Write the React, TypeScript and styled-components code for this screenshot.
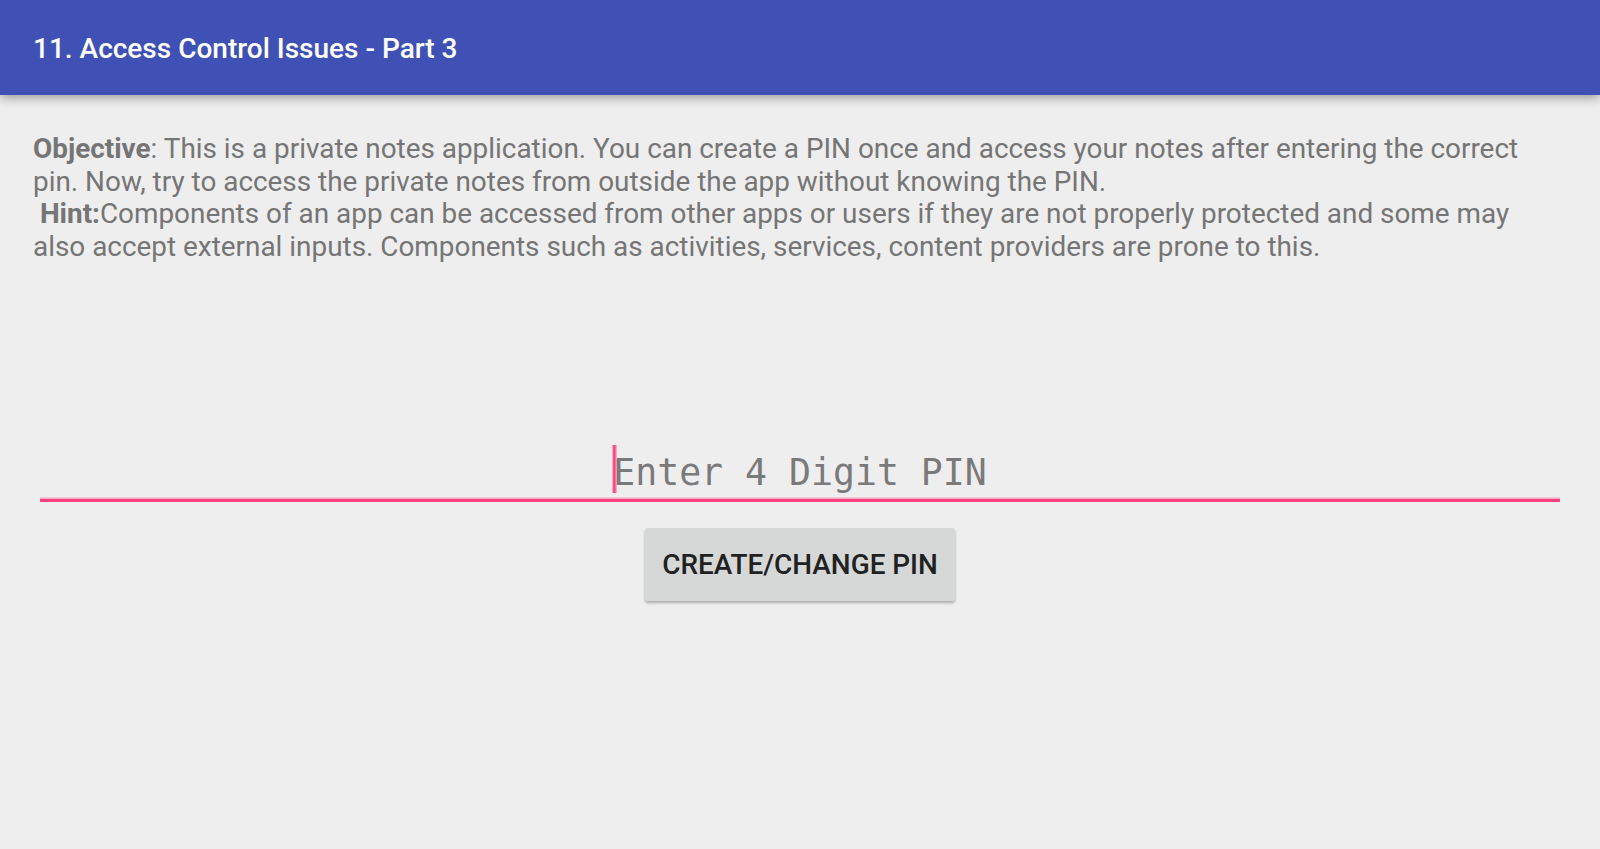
import React from "react";
import styled, { createGlobalStyle } from "styled-components";

const GlobalStyle = createGlobalStyle`
  html, body {
    margin: 0;
    padding: 0;
    background: #eeeeee;
  }
  body {
    font-family: Roboto, "Noto Sans", Arial, sans-serif;
  }
  #root {
    min-height: 100vh;
  }
`;

const Screen = styled.div`
  display: flex;
  flex-direction: column;
  min-height: 100vh;
  background: #eeeeee;
`;

const AppBar = styled.header`
  position: relative;
  z-index: 1;
  height: 95px;
  box-sizing: border-box;
  display: flex;
  align-items: center;
  padding: 2px 33px 0 33px;
  background: #3f51b5;
  box-shadow: 0 3px 10px rgba(0, 0, 0, 0.35);
`;

const Title = styled.h1`
  margin: 0;
  font-family: Roboto, sans-serif;
  font-weight: 500;
  font-size: 28px;
  color: #ffffff;
  letter-spacing: 0;
`;

const Content = styled.main`
  display: flex;
  flex-direction: column;
  padding: 38px 33px 0 33px;
`;

const Description = styled.p`
  margin: 0 15px 0 0;
  font-family: Roboto, sans-serif;
  font-size: 27.9px;
  line-height: 32.6px;
  color: #757575;
  white-space: pre-wrap;
`;

const Strong = styled.b`
  font-weight: 700;
`;

const PinField = styled.div`
  margin: 178px 7px 0 7px;
  height: 58px;
  display: flex;
  justify-content: center;
  align-items: flex-start;
  border-bottom: 3px solid #ff4081;
  box-shadow: 0 -1.5px 0 0 rgba(255, 64, 129, 0.4) inset;
`;

const Caret = styled.span`
  width: 5px;
  height: 48px;
  margin: 4px -4px 0 -1px;
  background: linear-gradient(
    to right,
    rgba(255, 64, 129, 0.15),
    #ff4081 35%,
    #ff4081 55%,
    rgba(255, 64, 129, 0.2)
  );
`;

const Placeholder = styled.span`
  margin-top: 8px;
  font-family: "DejaVu Sans Mono", "Liberation Mono", monospace;
  font-size: 36.5px;
  color: #7a7a7a;
  line-height: 47px;
`;

const ButtonRow = styled.div`
  display: flex;
  justify-content: center;
  margin-top: 26px;
`;

const Button = styled.button`
  width: 310px;
  height: 73px;
  border: none;
  border-radius: 3px;
  background: #d6d7d7;
  color: #212121;
  font-family: Roboto, sans-serif;
  font-weight: 500;
  font-size: 27.9px;
  text-transform: uppercase;
  box-shadow: 0 2px 3px rgba(0, 0, 0, 0.28);
  cursor: pointer;
`;

export default function App() {
  return (
    <>
      <GlobalStyle />
      <Screen>
        <AppBar>
          <Title>11. Access Control Issues - Part 3</Title>
        </AppBar>
        <Content>
          <Description>
            <Strong>Objective</Strong>: This is a private notes application. You can create a PIN once and access your notes after entering the correct pin. Now, try to access the private notes from outside the app without knowing the PIN.
            {"\n "}
            <Strong>Hint:</Strong>Components of an app can be accessed from other apps or users if they are not properly protected and some may also accept external inputs. Components such as activities, services, content providers are prone to this.
          </Description>
          <PinField>
            <Caret />
            <Placeholder>Enter 4 Digit PIN</Placeholder>
          </PinField>
          <ButtonRow>
            <Button>Create/Change PIN</Button>
          </ButtonRow>
        </Content>
      </Screen>
    </>
  );
}
